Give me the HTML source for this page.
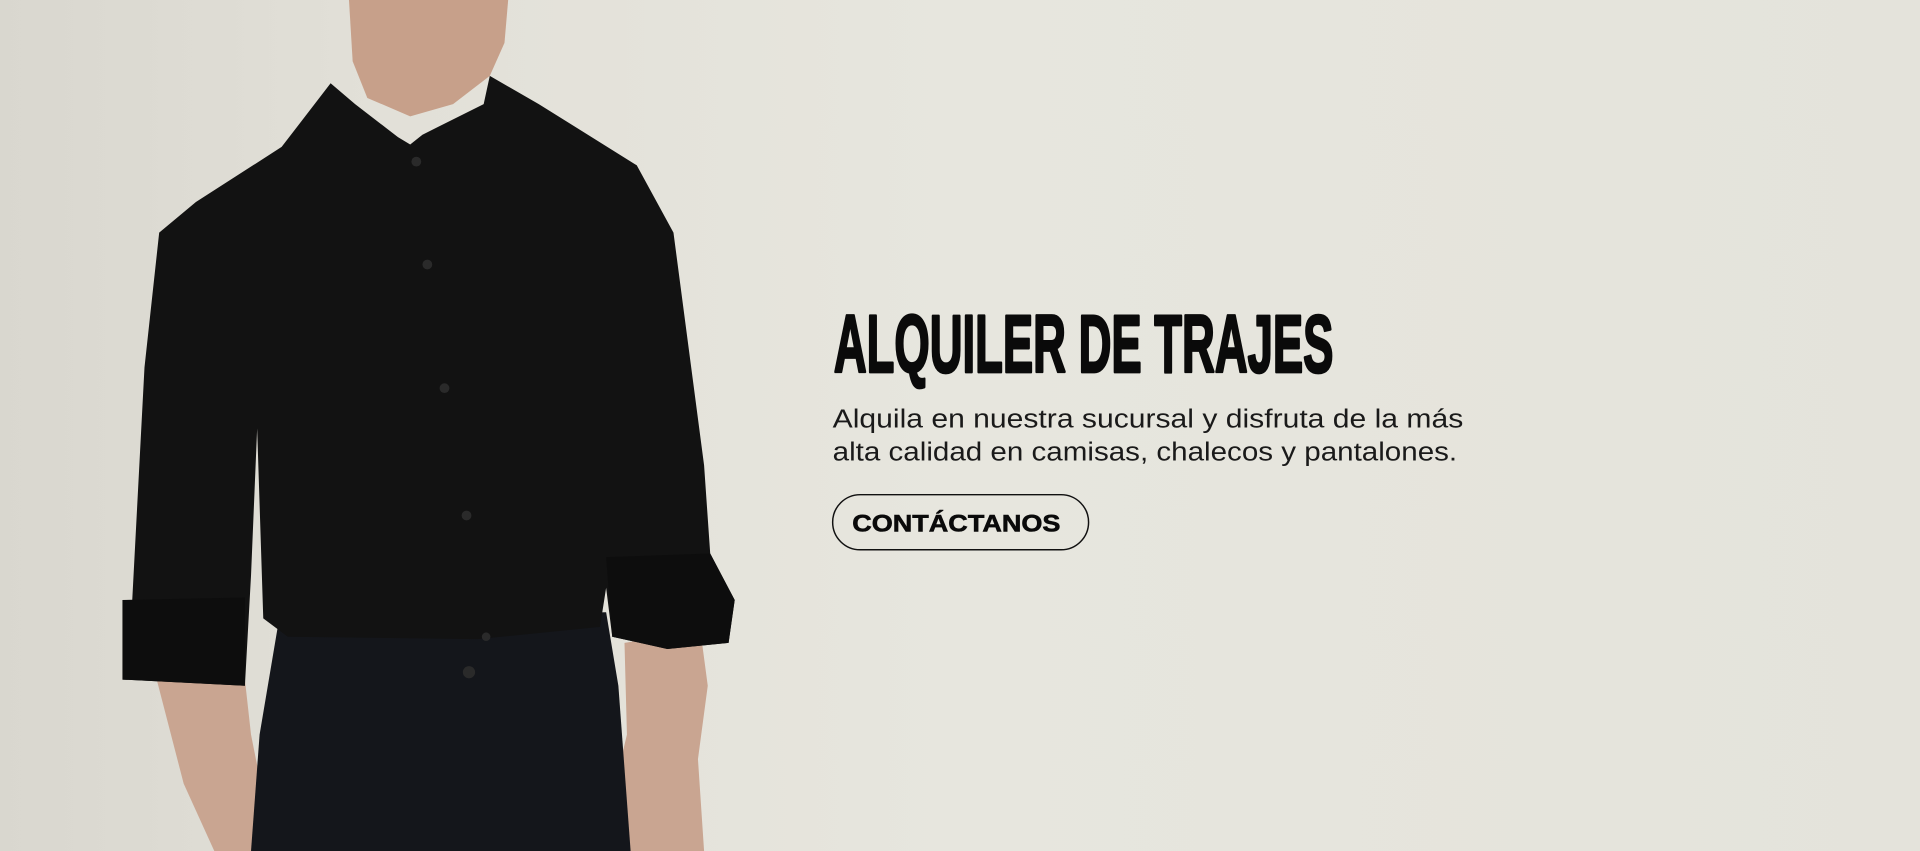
<!DOCTYPE html>
<html><head><meta charset="utf-8"><style>
html,body{margin:0;padding:0;width:1920px;height:851px;overflow:hidden;background:#e6e5dd}
svg{display:block}
</style></head><body>
<svg width="1920" height="851" viewBox="0 0 1568 695" preserveAspectRatio="none" xmlns="http://www.w3.org/2000/svg">
<defs>
<linearGradient id="bg" x1="0" y1="0" x2="1" y2="0">
<stop offset="0" stop-color="#d9d7cf"/><stop offset="0.2" stop-color="#e2e0d8"/><stop offset="0.5" stop-color="#e7e6de"/><stop offset="1" stop-color="#e4e3db"/>
</linearGradient>
</defs>
<rect width="1568" height="695" fill="url(#bg)"/>
<path d="M285,0 L415,0 L412,35 L400,62 L370,85 L335,95 L300,80 L288,50 Z" fill="#c7a08a"/>
<path d="M128,555 L200,555 L205,600 L215,650 L265,695 L175,695 L150,640 Z" fill="#c9a591"/>
<path d="M510,525 L572,515 L578,560 L570,620 L575,695 L482,695 L500,650 L512,600 Z" fill="#c9a591"/>
<path d="M228,505 L495,500 L505,560 L515,695 L205,695 L212,600 Z" fill="#14161b"/>
<path d="M270,68 L290,85 L325,112 L335,118 L345,110 L395,85 L400,62 L440,85 L520,135 L550,190 L575,380 L580,452 L600,490 L595,525 L545,530 L500,520 L495,480 L490,512 L390,522 L235,520 L215,505 L210,350 L205,470 L200,560 L100,555 L108,490 L118,300 L130,190 L160,165 L230,120 Z" fill="#121212"/>
<path d="M100,490 L200,488 L200,560 L100,555 Z" fill="#0d0d0d"/>
<path d="M495,455 L580,452 L600,490 L595,525 L545,530 L500,520 Z" fill="#0d0d0d"/>
<g fill="#2a2a2a">
<circle cx="340" cy="132" r="4"/><circle cx="349" cy="216" r="4"/><circle cx="363" cy="317" r="4"/><circle cx="381" cy="421" r="4"/><circle cx="397" cy="520" r="3.5"/><circle cx="383" cy="549" r="5"/>
</g>
<text x="681" y="304" font-family="Liberation Sans, sans-serif" font-weight="bold" font-size="67" fill="#0a0a0a" stroke="#0a0a0a" stroke-width="2.2" stroke-linejoin="round" textLength="408" lengthAdjust="spacingAndGlyphs">ALQUILER DE TRAJES</text>
<text x="680" y="349" font-family="Liberation Sans, sans-serif" font-size="21" fill="#1a1a1a" textLength="515" lengthAdjust="spacingAndGlyphs">Alquila en nuestra sucursal y disfruta de la más</text>
<text x="680" y="376" font-family="Liberation Sans, sans-serif" font-size="21" fill="#1a1a1a" textLength="510" lengthAdjust="spacingAndGlyphs">alta calidad en camisas, chalecos y pantalones.</text>
<rect x="680" y="404" width="209" height="45" rx="22.5" fill="none" stroke="#111" stroke-width="1.2"/>
<text x="696" y="434" font-family="Liberation Sans, sans-serif" font-weight="bold" font-size="20" fill="#0a0a0a" stroke="#0a0a0a" stroke-width="0.5" textLength="170" lengthAdjust="spacingAndGlyphs">CONTÁCTANOS</text>
</svg>
</body></html>
